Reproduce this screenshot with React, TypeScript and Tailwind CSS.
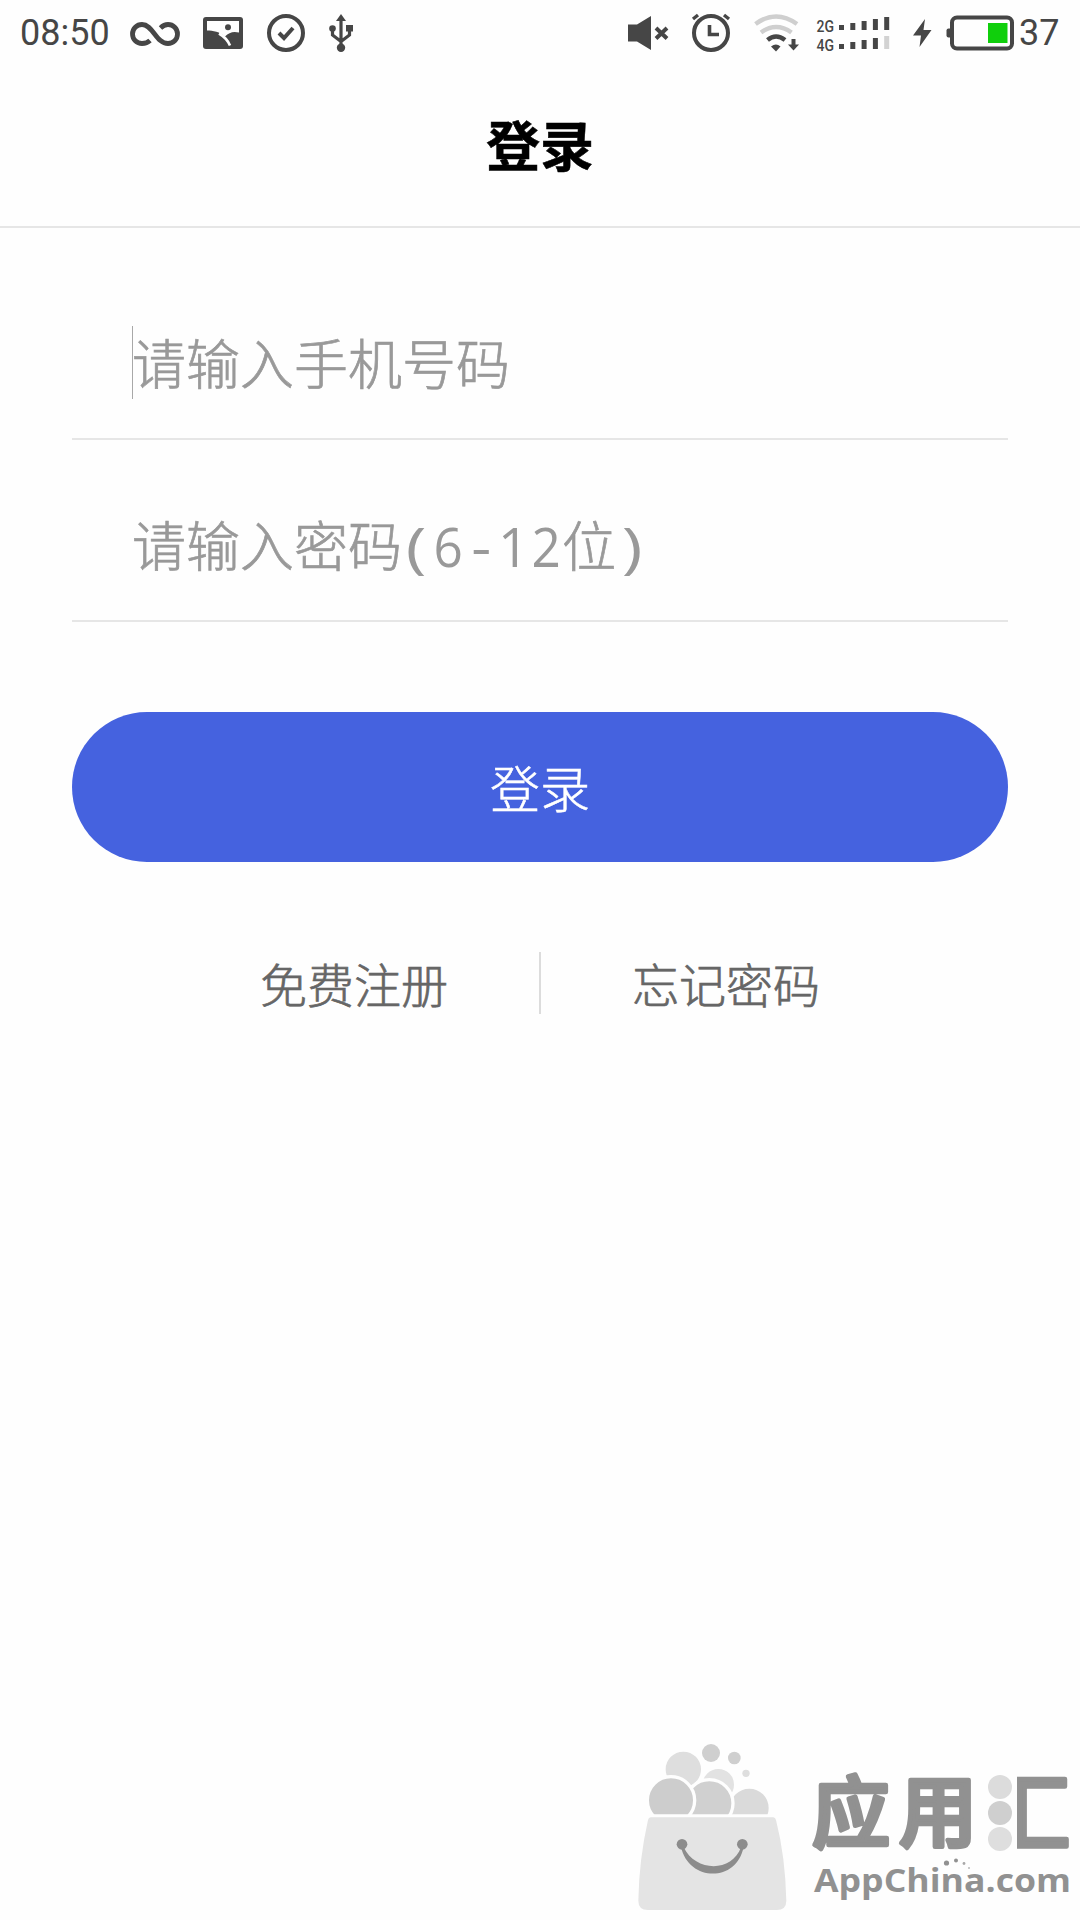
import React from 'react';

const DARK = '#464646';

function App() {
  return (
    <div className="flex h-[1920px] w-[1080px] flex-col overflow-hidden bg-[#fefefe] font-['Noto_Sans_CJK_SC',sans-serif]">
      <StatusBar />

      {/* Header */}
      <header className="flex h-[162px] items-center justify-center border-b-2 border-[#e6e6e6] pb-[5px]">
        <h1 className="text-[54px] leading-[80px] font-bold text-black [-webkit-text-stroke:0.5px_black]">登录</h1>
      </header>

      {/* Login form */}
      <form className="flex flex-col px-[72px]">
        <Field className="h-[212px] pt-[98px]">
          <span className="h-[73px] w-px bg-[#a8a8a8]" />
          <span className="-ml-px leading-[71px]">请输入手机号码</span>
        </Field>
        <Field className="h-[182px] pt-[68px]">
          <span className="leading-[72px]">
            请输入密码
            <MonoChar char="(" className="-ml-[2px] scale-x-130" />
            <MonoChar char="6" className="scale-x-95" />
            <MonoChar char="-" className="scale-x-115" />
            <MonoChar char="1" />
            <MonoChar char="2" className="scale-x-95" />
            位
            <MonoChar char=")" className="scale-x-130" />
          </span>
        </Field>
        <button
          type="button"
          className="mt-[90px] h-[150px] rounded-full bg-[#4562df] pb-[2px] text-[50px] font-light text-white [-webkit-text-stroke:0.5px_white]"
        >
          登录
        </button>
      </form>

      {/* Links */}
      <div className="mt-[90px] flex h-[62px] items-center justify-center text-[47px] leading-[60px] font-light whitespace-nowrap text-[#666] [-webkit-text-stroke:0.7px_#666]">
        <a className="w-[279px]">免费注册</a>
        <span className="h-[62px] w-[2px] bg-[#dcdcdc]" />
        <a className="w-[279px] pl-[91px]">忘记密码</a>
      </div>

      <Watermark />
    </div>
  );
}

function Field({ className, children }: { className: string; children: React.ReactNode }) {
  return (
    <div className={`flex border-b-2 border-[#e6e6e6] pl-[60px] text-[54px] font-light text-[#999] [-webkit-text-stroke:0.7px_#999] ${className}`}>
      {children}
    </div>
  );
}

function MonoChar({ char, className = '' }: { char: string; className?: string }) {
  return (
    <span className={`inline-block w-[32.4px] text-center font-['Open_Sans',sans-serif] font-normal [-webkit-text-stroke:0px] ${className}`}>
      {char}
    </span>
  );
}

function StatusBar() {
  return (
    <div className="flex h-[66px] items-start text-[36px] leading-[67px] text-[#464646]">
      <span className="w-[125px] pl-[20px] font-['Roboto',sans-serif]">08:50</span>

      {/* Notification icons */}
      <svg className="h-[66px] w-[240px]" viewBox="125 0 240 66" fill="none">
        <path
          d="M150 40.500C147 43.500 144 43.500 142 43.500A9.500 9.500 0 0 1 142 24.500C153 24.500 156 43.500 168 43.500A9.500 9.500 0 0 0 168 24.500C165 24.500 162.500 26 160.500 28"
          stroke={DARK}
          strokeWidth="4.800"
        />
        <rect x="203" y="17" width="40" height="32" rx="3" fill={DARK} />
        <path d="M207 21H239V32.500C233 31 229 32.500 225 36.500C220 32 213 30.500 207 30.500Z" fill="#fefefe" />
        <path d="M219 33.500C226 37.500 228.500 42 230 45.500" stroke="#fefefe" strokeWidth="2.600" />
        <circle cx="228" cy="27.300" r="3" fill={DARK} />
        <circle cx="286" cy="33" r="17" stroke={DARK} strokeWidth="4" />
        <path d="M279 33L284 38L293 28" stroke={DARK} strokeWidth="4" />
        <path d="M341 19V46M332.500 29V35L341 41.500M349.500 29V35L341 41.500" stroke={DARK} strokeWidth="3.200" />
        <path d="M341 14L346 21H336Z" fill={DARK} />
        <circle cx="332.500" cy="28.500" r="3.300" fill={DARK} />
        <rect x="346" y="25" width="7" height="6.500" fill={DARK} />
        <circle cx="341" cy="47.800" r="4.200" fill={DARK} />
      </svg>

      {/* System icons */}
      <svg className="ml-auto h-[66px] w-[403px]" viewBox="615 0 403 66" fill="none">
        <path d="M628 24.500H637L651 16V50L637 41.500H628Z" fill={DARK} />
        <path d="M656 28L667 38.500M667 28L656 38.500" stroke={DARK} strokeWidth="4" />

        <circle cx="711" cy="33" r="17" stroke={DARK} strokeWidth="4" />
        <path d="M709.500 25V34.500H719" stroke={DARK} strokeWidth="3.600" />
        <path d="M693 19L698 15M729 19L724 15" stroke={DARK} strokeWidth="3.400" />

        <path d="M755.500 24Q776 9 797 24" stroke="#cfcfcf" strokeWidth="4.500" />
        <path d="M761 32.500Q776 21.500 791.500 32.500" stroke="#cfcfcf" strokeWidth="4.500" />
        <path d="M767.500 40Q776 33 785 40" stroke={DARK} strokeWidth="4.500" />
        <path d="M771 46.500Q776 42.500 780.500 46.500L776 51.500Z" fill={DARK} />
        <path d="M793.500 39V45" stroke={DARK} strokeWidth="4" />
        <path d="M788 44.500H799L793.500 50.500Z" fill={DARK} />

        <text x="816.500" y="31.500" textLength="17.500" lengthAdjust="spacingAndGlyphs" fontFamily="Roboto" fontWeight="500" fontSize="16.500" fill={DARK}>2G</text>
        <text x="816.500" y="51" textLength="17.500" lengthAdjust="spacingAndGlyphs" fontFamily="Roboto" fontWeight="500" fontSize="16.500" fill={DARK}>4G</text>
        {[5, 7, 9, 11, 13].map((height, i) => (
          <g key={height} fill={DARK}>
            <rect x={839 + i * 11.300} y={30 - height} width="5" height={height} />
            <rect x={839 + i * 11.300} y={49 - height} width="5" height={height} fill={i === 4 ? '#d2d2d2' : DARK} />
          </g>
        ))}

        <path d="M925 19L913 35.500H921L919.500 47L931.500 30H923.500Z" fill={DARK} />
        <rect x="952" y="17.500" width="60" height="31" rx="5" stroke={DARK} strokeWidth="4" />
        <path d="M950 28.500H948.500Q946.500 28.500 946.500 30.500V35.500Q946.500 37.500 948.500 37.500H950Z" fill={DARK} />
        <rect x="988" y="23" width="19.500" height="20" fill="#10cf0c" />
      </svg>
      <span className="w-[62px] pl-px font-['Roboto',sans-serif]">37</span>
    </div>
  );
}

function Watermark() {
  return (
    <svg className="mt-auto ml-auto h-[190px] w-[460px]" viewBox="620 1730 460 190">
      {/* Bubbles and shopping bag */}
      <g transform="translate(620 1730) scale(0.33333)">
        <g stroke="#fefefe" strokeWidth="10">
          <circle cx="295" cy="164" r="52" fill="#e2e2e2" />
          <circle cx="190" cy="118" r="58" fill="#dedede" />
          <circle cx="388" cy="234" r="63" fill="#dadada" />
          <circle cx="268" cy="220" r="71" fill="#d0d0d0" />
          <circle cx="153" cy="211" r="71" fill="#cdcdcd" />
        </g>
        <circle cx="273" cy="69" r="27" fill="#cfcfcf" />
        <circle cx="343" cy="84" r="19" fill="#cfcfcf" />
        <circle cx="378" cy="130" r="11" fill="#dedede" />
        <path d="M60 253H500V310H60Z" fill="#fefefe" />
        <path d="M92 262H460Q466 262 468 270Q496 380 499 512Q499 540 470 540H84Q55 540 55 512Q57 390 84 270Q86 262 92 262Z" fill="#e4e4e4" />
        <circle cx="186" cy="343" r="16" fill="#8c8c8c" />
        <circle cx="367" cy="343" r="16" fill="#8c8c8c" />
        <path d="M183 350C205 455 350 460 371 350L363 352C335 430 225 425 191 352Z" fill="#8c8c8c" />
      </g>

      {/* Brand name, the water dots of the last character are replaced by bubbles */}
      <g fontFamily="'Noto Sans CJK SC', sans-serif" fontWeight="500" fontSize="78" fill="#919191" stroke="#919191" strokeWidth="4.500" strokeLinejoin="round">
        <text x="812" y="1842">应</text>
        <text x="899" y="1841">用</text>
        <text x="989" y="1843" fontSize="81">汇</text>
      </g>
      <rect x="980" y="1765" width="37" height="92" fill="#fefefe" />
      <circle cx="1000" cy="1787" r="12" fill="#dcdcdc" />
      <circle cx="1000" cy="1813" r="12" fill="#cfcfcf" />
      <circle cx="1000" cy="1839" r="12" fill="#dedede" />

      <text x="814" y="1892" textLength="257" lengthAdjust="spacingAndGlyphs" fontFamily="'Open Sans', sans-serif" fontWeight="700" fontSize="33" fill="#919191">AppChina.com</text>
      <circle cx="946.500" cy="1863" r="2.600" fill="#919191" />
      <circle cx="956" cy="1860.500" r="2" fill="#919191" />
      <circle cx="964" cy="1863.500" r="1.400" fill="#a8a8a8" />
      <circle cx="969" cy="1868" r="1" fill="#b8b8b8" />
    </svg>
  );
}

export default App;
